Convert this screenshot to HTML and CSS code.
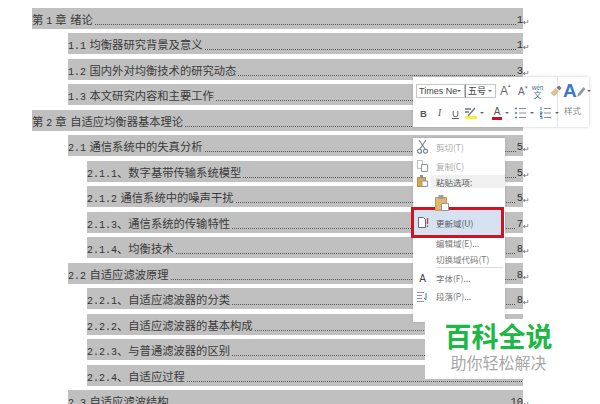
FILE: index.html
```html
<!DOCTYPE html>
<html lang="zh">
<head>
<meta charset="utf-8">
<title>目录</title>
<link rel="stylesheet" href="styles.css">
</head>
<body>
<main class="toc">
  <div class="row l0"><span class="bar"><span class="t">第<i class="ch">1</i>章<i> </i>绪论</span><span class="dots"></span><span class="n">1</span></span><span class="ret">↵</span></div>
  <div class="row l1"><span class="bar"><span class="t"><i>1.1 </i>均衡器研究背景及意义</span><span class="dots"></span><span class="n">1</span></span><span class="ret">↵</span></div>
  <div class="row l1"><span class="bar"><span class="t"><i>1.2 </i>国内外对均衡技术的研究动态</span><span class="dots"></span><span class="n">3</span></span><span class="ret">↵</span></div>
  <div class="row l1"><span class="bar"><span class="t"><i>1.3 </i>本文研究内容和主要工作</span><span class="dots"></span></span></div>
  <div class="row l0"><span class="bar"><span class="t">第<i class="ch">2</i>章<i> </i>自适应均衡器基本理论</span><span class="dots"></span></span></div>
  <div class="row l1"><span class="bar"><span class="t"><i>2.1 </i>通信系统中的失真分析</span><span class="dots"></span><span class="n">5</span></span><span class="ret">↵</span></div>
  <div class="row l2"><span class="bar"><span class="t"><i>2.1.1</i>、数字基带传输系统模型</span><span class="dots"></span><span class="n">5</span></span><span class="ret">↵</span></div>
  <div class="row l2"><span class="bar"><span class="t"><i>2.1.2 </i>通信系统中的噪声干扰</span><span class="dots"></span><span class="n">5</span></span><span class="ret">↵</span></div>
  <div class="row l2"><span class="bar"><span class="t"><i>2.1.3</i>、通信系统的传输特性</span><span class="dots"></span><span class="n">7</span></span><span class="ret">↵</span></div>
  <div class="row l2"><span class="bar"><span class="t"><i>2.1.4</i>、均衡技术</span><span class="dots"></span><span class="n">8</span></span><span class="ret">↵</span></div>
  <div class="row l1"><span class="bar"><span class="t"><i>2.2 </i>自适应滤波原理</span><span class="dots"></span><span class="n">8</span></span><span class="ret">↵</span></div>
  <div class="row l2"><span class="bar"><span class="t"><i>2.2.1</i>、自适应滤波器的分类</span><span class="dots"></span><span class="n">8</span></span><span class="ret">↵</span></div>
  <div class="row l2"><span class="bar"><span class="t"><i>2.2.2</i>、自适应滤波器的基本构成</span><span class="dots"></span></span></div>
  <div class="row l2"><span class="bar"><span class="t"><i>2.2.3</i>、与普通滤波器的区别</span><span class="dots"></span></span></div>
  <div class="row l2"><span class="bar"><span class="t"><i>2.2.4</i>、自适应过程</span><span class="dots"></span></span></div>
  <div class="row l1"><span class="bar"><span class="t"><i>2.3 </i>自适应滤波结构</span><span class="dots"></span><span class="n">10</span></span><span class="ret">↵</span></div>
</main>

<section class="mini">
  <div class="mini-main">
    <div class="mini-line">
      <span class="combo c-font"><span>Times Ne</span><b class="caret"></b></span><span class="combo c-size"><span>五号</span><b class="caret"></b></span>
      <span class="a-big">A<sup>▴</sup></span><span class="a-small">A<sup>▾</sup></span>
      <span class="wen"><small>wén</small>文</span>
      <svg class="brush" width="12" height="12" viewBox="0 0 12 12"><path d="M0.500 8l5-5 3.500 3.500-5 5z" fill="#dcc28c"/><path d="M6.500 2.500l2.500-2 2.500 2.500-2 2.500z" fill="#6f7885"/></svg>
    </div>
    <div class="mini-line line2">
      <span class="fmt bold">B</span><span class="fmt ital">I</span><span class="fmt und">U</span>
      <span class="hl"><svg width="12" height="9" viewBox="0 0 12 9"><path d="M0 2h6M0 5h4M3 9l7-8" stroke="#6d7682" stroke-width="1.400" fill="none"/></svg><em class="yl"></em></span><b class="caret cg"></b>
      <span class="col">A<em class="rd"></em></span><b class="caret cg2"></b>
      <svg class="ls" width="11" height="12" viewBox="0 0 11 12"><path d="M4 1.500h7M4 6h7M4 10.500h7" stroke="#8a93a0"/><path d="M0 1.500h2M0 6h2M0 10.500h2" stroke="#3b79c4" stroke-width="1.600"/></svg><b class="caret cg3"></b>
      <svg class="ls2" width="11" height="12" viewBox="0 0 11 12"><path d="M4 1.500h7M4 6h7M4 10.500h7" stroke="#8a93a0"/><path d="M1 0v3M0 5h2v1.500H0V8h2M0 9.500h2V12H0" stroke="#3b79c4" fill="none"/></svg><b class="caret cg4"></b>
    </div>
  </div>
  <div class="mini-style">
    <div class="sty-a"><span>A</span><svg width="9" height="13" viewBox="0 0 9 13"><path d="M0 12l1.500-4 5-6 2 2-5 6z" fill="#8d99a8"/></svg><b class="caret"></b></div>
    <span class="sty-t">样式</span>
  </div>
</section>

<nav class="menu">
  <div class="item dim"><span class="mi"><svg width="11" height="14" viewBox="0 0 11 14"><path d="M2 0l6 9M9 0L3 9" stroke="#7d8794" stroke-width="1.200" fill="none"/><circle cx="2.500" cy="11.200" r="2" fill="none" stroke="#7d8794" stroke-width="1.200"/><circle cx="8.500" cy="11.200" r="2" fill="none" stroke="#7d8794" stroke-width="1.200"/></svg></span>剪切(T)</div>
  <div class="item dim"><span class="mi"><svg width="11" height="12" viewBox="0 0 11 12"><path d="M.5.500h5v8h-5z" fill="#fff" stroke="#b5bcc6"/><path d="M4.500 4.500h6v7h-6z" fill="#fff" stroke="#8d97a4"/></svg></span>复制(C)</div>
  <div class="item head"><span class="mi"><svg width="11" height="12" viewBox="0 0 11 12"><path d="M.5 2.500h8v9h-8z" fill="#d9a653" stroke="#b78a45"/><path d="M3 0h3v3H3z" fill="#8a8f99"/><path d="M5 6h5.500v5.500H5z" fill="#fff" stroke="#8d97a4"/></svg></span><span class="head-t">粘贴选项:</span></div>
  <div class="paste"><svg width="15" height="16" viewBox="0 0 15 16"><path d="M.5 2.500h11v13H.5z" fill="#e2b66e" stroke="#c39a58"/><path d="M3.500 0h5v4h-5z" fill="#9a9ea6"/><path d="M6.500 8.500h7v7h-7z" fill="#fff" stroke="#8d97a4"/></svg></div>
  <div class="item hot"><span class="mi"><svg width="11" height="11" viewBox="0 0 11 11"><path d="M.5.500h5l2 2v8h-7z" fill="#fff" stroke="#5f6875"/><path d="M9.500 1v6M9.500 8.500V10" stroke="#b8483a" stroke-width="1.300"/></svg></span>更新域(U)</div>
  <div class="item after-hot"><span class="mi"></span>编辑域(E)...</div>
  <div class="item short"><span class="mi"></span>切换域代码(T)</div>
  <div class="sep"></div>
  <div class="item tall"><span class="mi a">A</span>字体(F)...</div>
  <div class="item tall"><span class="mi"><svg width="11" height="11" viewBox="0 0 11 11"><path d="M0 1.500h7M0 4.500h5M0 7.500h5M0 10.500h7" stroke="#8a93a0"/><path d="M9 2v6.500L7 7" stroke="#3b79c4" fill="none"/></svg></span>段落(P)...</div>
</nav>

<aside class="mark">
  <div class="mark-a">百科全说</div>
  <div class="mark-b">助你轻松解决</div>
</aside>
</body>
</html>
```
FILE: styles.css
```css
html, body { margin: 0; padding: 0; }
body {
  width: 600px;
  height: 404px;
  overflow: hidden;
  background: #fff;
  position: relative;
  font-family: "Noto Sans CJK SC", sans-serif;
  color: #3a3a3a;
}
.toc {
  padding: 8px 0 0 32px;
  display: flex;
  flex-direction: column;
  gap: 4.470px;
}
.row { display: flex; height: 21px; flex: none; width: 491px; }
.l1 { padding-left: 36px; width: 455px; }
.l2 { padding-left: 55px; width: 436px; }
.bar {
  flex: 1;
  display: flex;
  align-items: flex-end;
  background: #c0c0c0;
  font-size: 11.300px;
  line-height: 15px;
  min-width: 0;
}
.t { white-space: pre; }
.t i { font-style: normal; font-family: "Liberation Mono", monospace; font-size: 10px; word-spacing: -2.500px; color: #333; }
.t .ch { padding: 0 3px; }
.dots {
  flex: 1;
  height: 1px;
  margin: 0 1px 4px 2px;
  background: repeating-linear-gradient(90deg, #555 0 1px, transparent 1px 2px);
}
.n { font-family: "Liberation Mono", monospace; font-size: 10.500px; line-height: 17px; color: #333; }
.ret { font-size: 8px; line-height: 30px; color: #666; width: 9px; margin-right: -9px; font-family: "DejaVu Sans", sans-serif; }

.mini {
  position: absolute;
  left: 413px;
  top: 77px;
  width: 176px;
  height: 50px;
  background: #fff;
  box-shadow: 0 0 3px rgba(120,120,120,.4);
  display: flex;
}
.mini-main { width: 145px; padding: 7px 0 0 3px; box-sizing: border-box; border-right: 1px solid #e6e6e6; }
.mini-line { display: flex; align-items: center; height: 14px; color: #555; }
.line2 { height: 20px; margin-top: 5px; padding-left: 4px; }
.combo {
  height: 14px;
  border: 1px solid #c6c6c6;
  font-size: 9px;
  line-height: 14px;
  box-sizing: border-box;
  display: flex;
  align-items: center;
  justify-content: space-between;
  padding: 0 3px 0 2px;
  color: #444;
  font-family: "Liberation Sans", sans-serif;
  white-space: nowrap;
}
.c-font { width: 49px; flex: none; }
.c-size { width: 31px; flex: none; border-left: 1px solid #8a8a8a; font-family: "Noto Sans CJK SC", sans-serif; }
.caret { display: inline-block; width: 0; height: 0; border: 2px solid transparent; border-top: 2px solid #666; border-bottom: 0; flex: none; }
.a-big, .a-small { font-family: "Liberation Sans", sans-serif; color: #667; position: relative; }
.a-big { font-size: 12px; margin-left: 4px; }
.a-small { font-size: 10px; margin-left: 10px; }
.mini-line sup { font-size: 5px; position: absolute; top: -2px; color: #777; }
.wen { display: flex; flex-direction: column; align-items: center; font-size: 8px; line-height: 7px; margin-left: 7px; color: #4d6d99; }
.wen small { font-size: 6px; }
.brush { flex: none; margin-left: 7px; }
.fmt { font-family: "Liberation Sans", sans-serif; font-size: 9.500px; width: 6px; text-align: center; color: #555; flex: none; }
.ital { font-family: "Liberation Serif", serif; margin-left: 11px; width: 5px; font-style: italic; }
.bold { font-weight: bold; }
.und { text-decoration: underline; margin-left: 10px; }
.hl, .col { display: flex; flex-direction: column; align-items: center; width: 12px; flex: none; }
.hl { margin-left: 7px; }
.col { width: 10px; margin-left: 8px; font-family: "Liberation Sans", sans-serif; font-size: 10px; line-height: 11px; color: #555; }
.yl, .rd { display: block; width: 12px; height: 3px; background: #f7ee3b; }
.rd { width: 10px; background: #c8101e; }
.cg { margin-left: 3px; }
.cg2 { margin-left: 3px; }
.ls { margin-left: 6px; flex: none; }
.cg3 { margin-left: 4px; }
.ls2 { margin-left: 6px; flex: none; }
.cg4 { margin-left: 4px; }
.mini-style { flex: 1; display: flex; flex-direction: column; padding: 4px 0 0 5px; }
.sty-a { display: flex; align-items: center; height: 20px; white-space: nowrap; }
.sty-a .caret { margin-left: 1px; }
.sty-a span { font-family: "Liberation Sans", sans-serif; font-size: 19px; color: #3d78c2; font-weight: bold; line-height: 20px; }
.sty-t { font-size: 8.500px; line-height: 12px; color: #888; margin-top: 3px; padding-left: 1px; }

.menu {
  position: absolute;
  left: 413px;
  top: 138px;
  width: 92px;
  height: 184px;
  background: #fff;
  box-shadow: 0 0 3px rgba(120,120,120,.35);
  font-size: 8.500px;
  color: #777;
  box-sizing: border-box;
}
.item { display: flex; align-items: center; height: 18.500px; white-space: nowrap; }
.mi { width: 23px; flex: none; display: flex; justify-content: center; box-sizing: border-box; padding-right: 4px; }
.dim { color: #ababab; }
.head { height: 13px; color: #555; background: linear-gradient(90deg, #fff 18px, #f0f0f0 18px); }
.head .mi { height: 13px; align-items: flex-start; }
.paste { height: 19px; padding: 7px 0 0 22px; box-sizing: border-box; position: relative; z-index: 2; }
.hot {
  position: relative;
  height: 31px;
  margin-left: -2px;
  width: 93px;
  box-sizing: border-box;
  border: 3px solid #cc1424;
  background: #d6e2f1;
  color: #555;
  z-index: 1;
}
.hot .mi { width: 22px; }
.after-hot { margin-top: -4px; height: 17px; }
.short { height: 16px; }
.sep { height: 1px; background: #ddd; margin: 0 2px 1px 23px; }
.tall { height: 18px; }
.a { font-family: "Liberation Sans", sans-serif; color: #444; font-size: 10px; }

.mark {
  position: absolute;
  left: 425px;
  top: 319px;
  width: 147px;
  height: 60px;
  background: #fff;
  text-align: center;
  z-index: 3;
}
.mark-a { font-size: 27px; line-height: 34px; font-weight: 700; color: #1cb744; }
.mark-b { font-size: 16px; line-height: 18px; color: #a8a8a8; }
```
